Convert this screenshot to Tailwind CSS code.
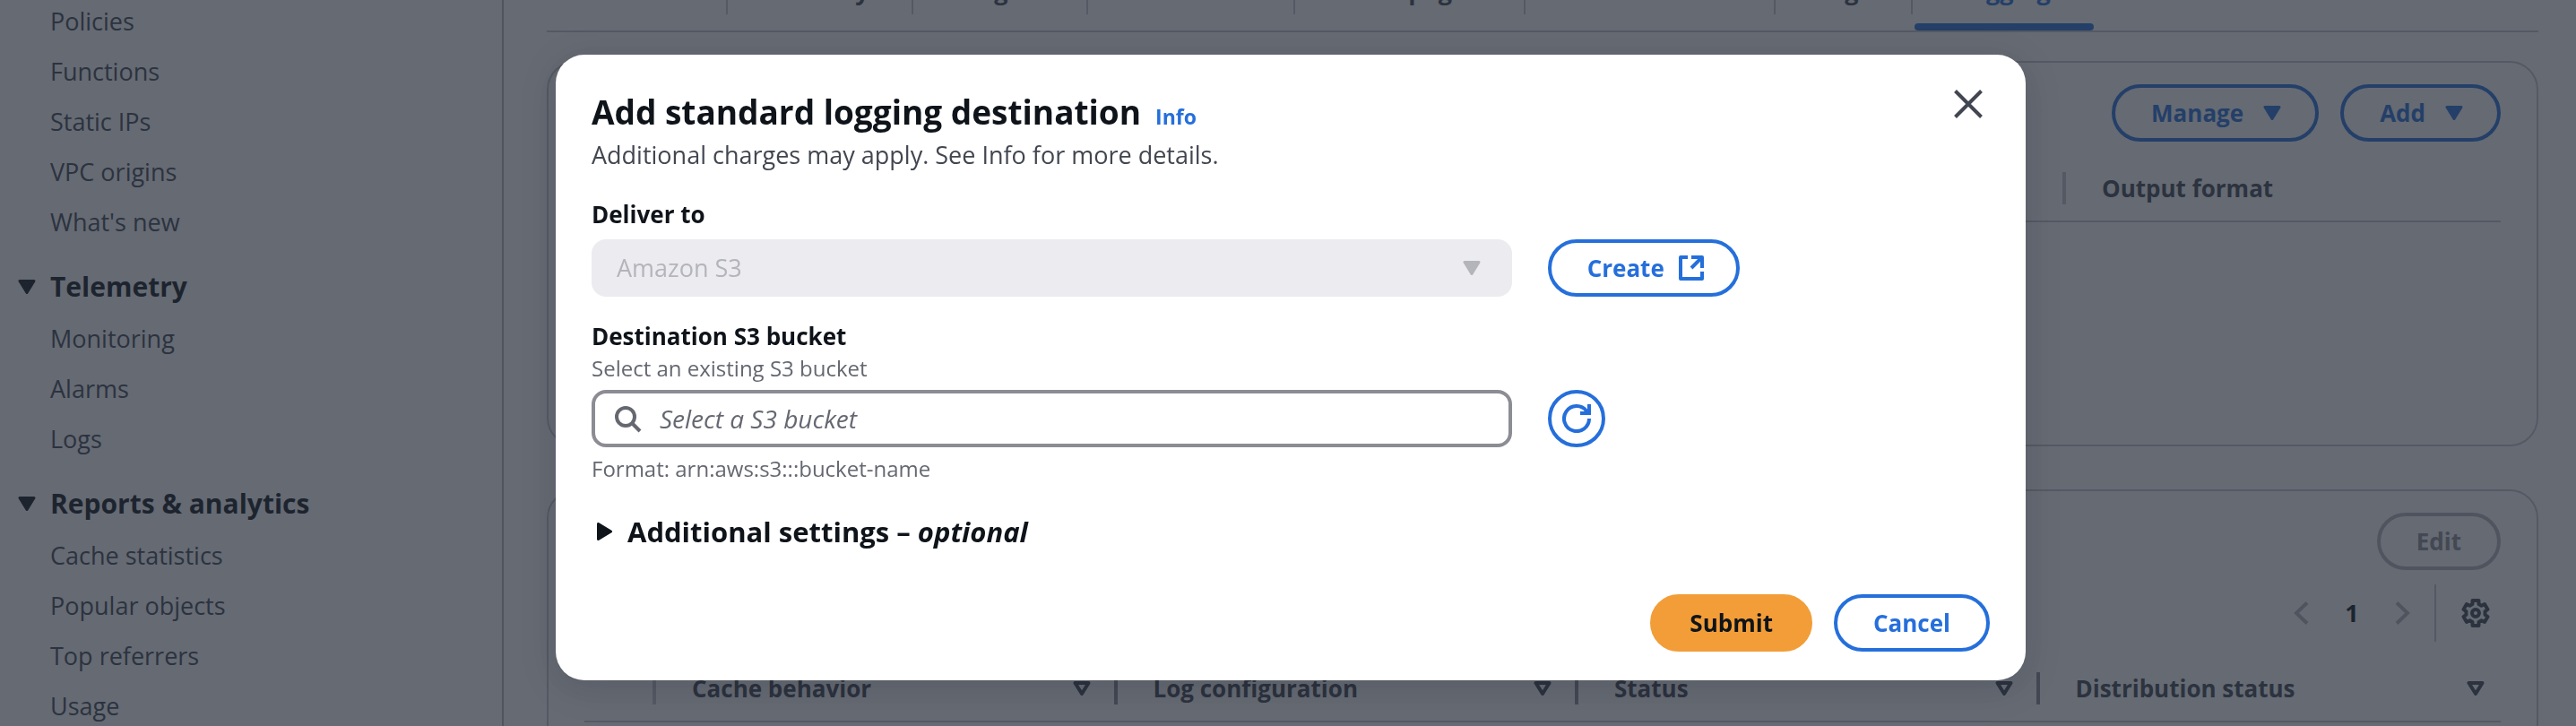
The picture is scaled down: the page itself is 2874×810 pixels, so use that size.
<!DOCTYPE html>
<html lang="en">

<head>
  <meta charset="UTF-8">
  <meta name="viewport" content="width=device-width, initial-scale=1.0">
  <title>Add standard logging destination</title>
  <script src="https://cdn.jsdelivr.net/npm/@tailwindcss/browser@4"></script>
</head>

<body class="h-screen overflow-hidden bg-white font-['Open_Sans',sans-serif] text-[27px] leading-10 text-[#424650]">
  <!-- Shared icons -->
  <svg class="hidden">
    <symbol id="caret-down" viewBox="0 0 20 16">
      <path d="M2 1.500h16L10 14.500z" fill="currentColor" stroke="currentColor" stroke-width="3" stroke-linejoin="round" />
    </symbol>
    <symbol id="caret-outline" viewBox="0 0 20 16">
      <path d="M2.500 2h15L10 14z" fill="none" stroke="currentColor" stroke-width="4" stroke-linejoin="round" />
    </symbol>
  </svg>

  <div class="flex h-full overflow-hidden">
    <!-- Sidebar -->
    <nav class="w-[562px] shrink-0 border-r-2 border-[#b4b4bb] pt-1 pl-5">
      <ul class="flex flex-col gap-4 pl-9">
        <li><a href="#">Policies</a></li>
        <li><a href="#">Functions</a></li>
        <li><a href="#">Static IPs</a></li>
        <li><a href="#">VPC origins</a></li>
        <li><a href="#">What's new</a></li>
      </ul>
      <button class="mt-8 flex items-center gap-4 text-[30px] font-bold text-[#0f141a]">
        <svg class="h-4 w-5"><use href="#caret-down" /></svg>Telemetry
      </button>
      <ul class="mt-[18px] flex flex-col gap-4 pl-9">
        <li><a href="#">Monitoring</a></li>
        <li><a href="#">Alarms</a></li>
        <li><a href="#">Logs</a></li>
      </ul>
      <button class="mt-8 flex items-center gap-4 text-[30px] font-bold text-[#0f141a]">
        <svg class="h-4 w-5"><use href="#caret-down" /></svg>Reports &amp; analytics
      </button>
      <ul class="mt-[18px] flex flex-col gap-4 pl-9">
        <li><a href="#">Cache statistics</a></li>
        <li><a href="#">Popular objects</a></li>
        <li><a href="#">Top referrers</a></li>
        <li><a href="#">Usage</a></li>
      </ul>
    </nav>

    <main class="min-w-0 grow pr-[42px] pl-12">
      <!-- Tabs -->
      <div class="-mt-[30px] grid grid-cols-[202px_207px_195px_231px_257px_279px_153px_202px] border-b-2 border-[#c6c6cd] text-center font-bold">
        <a href="#" class="mb-[18px] h-[46px] border-r-2 border-[#c6c6cd]">General</a>
        <a href="#" class="mb-[18px] h-[46px] border-r-2 border-[#c6c6cd]">Security</a>
        <a href="#" class="mb-[18px] h-[46px] border-r-2 border-[#c6c6cd]">Origins</a>
        <a href="#" class="mb-[18px] h-[46px] border-r-2 border-[#c6c6cd]">Behaviors</a>
        <a href="#" class="mb-[18px] h-[46px] border-r-2 border-[#c6c6cd]">Error pages</a>
        <a href="#" class="mb-[18px] h-[46px] border-r-2 border-[#c6c6cd]">Invalidations</a>
        <a href="#" class="mb-[18px] h-[46px] border-r-2 border-[#c6c6cd]">Tags</a>
        <a href="#" class="flex flex-col justify-between pl-0.5 text-[#256fdb]">Logging<span class="h-2 rounded bg-[#256fdb]"></span></a>
      </div>

      <!-- Log destinations -->
      <section class="mt-8 h-[430px] rounded-[32px] border-2 border-[#c6c6cd] px-10 pt-6">
        <div class="flex justify-end gap-6 text-[26px] font-bold text-[#256fdb]">
          <button class="flex h-16 items-center gap-[22px] rounded-full border-4 border-[#256fdb] pr-[38px] pl-10">Manage <svg class="h-4 w-5"><use href="#caret-down" /></svg></button>
          <button class="flex h-16 items-center gap-[22px] rounded-full border-4 border-[#256fdb] pr-[38px] pl-10">Add <svg class="h-4 w-5"><use href="#caret-down" /></svg></button>
        </div>
        <table class="mt-4 w-full table-fixed text-left text-[26px]">
          <thead>
            <tr class="border-b-2 border-[#c6c6cd]">
              <th class="py-[18px]"><div class="h-9 border-r-4 border-[#c6c6cd]"></div></th>
              <th class="w-[485px] py-[18px] font-bold"><div class="flex h-9 items-center pl-10">Output format</div></th>
            </tr>
          </thead>
        </table>
      </section>

      <!-- Log configurations -->
      <section class="mt-12 h-[430px] rounded-[32px] border-2 border-[#c6c6cd] px-10 pt-6">
        <div class="flex justify-end">
          <button disabled class="h-16 rounded-full border-4 border-[#b4b4bb] px-10 text-[26px] font-bold text-[#8c8c94]">Edit</button>
        </div>
        <div class="mt-4 flex h-16 items-center justify-end">
          <button disabled aria-label="Previous page" class="text-[#b4b4bb]">
            <svg class="h-8 w-8" viewBox="0 0 32 32" fill="none" stroke="currentColor" stroke-width="4"><path d="M22 4.500 10 16l12 11.500" /></svg>
          </button>
          <button class="w-20 font-bold text-[#0f141a]">1</button>
          <button disabled aria-label="Next page" class="text-[#b4b4bb]">
            <svg class="h-8 w-8" viewBox="0 0 32 32" fill="none" stroke="currentColor" stroke-width="4"><path d="m10 4.500 12 11.500-12 11.500" /></svg>
          </button>
          <div class="mr-7 ml-5 h-16 w-0.5 bg-[#c6c6cd]"></div>
          <button aria-label="Preferences" class="mr-3">
            <svg class="h-8 w-8" viewBox="0 0 32 32" fill="none" stroke="currentColor" stroke-width="4" stroke-linejoin="round">
              <path d="M12.500 2h7v4l3 1.700 3.500-1.700 3.500 6-3 2.200v3.600l3 2.200-3.500 6-3.500-1.700-3 1.700v4h-7v-4l-3-1.700L6 26l-3.500-6 3-2.200v-3.600l-3-2.200L6 6l3.500 1.700 3-1.700z" />
              <circle cx="16" cy="16" r="4" />
            </svg>
          </button>
        </div>
        <table class="mt-4 w-full table-fixed text-left text-[26px]">
          <thead>
            <tr class="border-b-2 border-[#c6c6cd]">
              <th class="w-20 py-[18px]"><div class="h-9 border-r-4 border-[#c6c6cd]"></div></th>
              <th class="py-[18px] font-bold"><div class="flex h-9 items-center justify-between border-r-4 border-[#8c8c94] pr-[26px] pl-10">Cache behavior <svg class="h-4 w-5"><use href="#caret-outline" /></svg></div></th>
              <th class="py-[18px] font-bold"><div class="flex h-9 items-center justify-between border-r-4 border-[#8c8c94] pr-[26px] pl-10">Log configuration <svg class="h-4 w-5"><use href="#caret-outline" /></svg></div></th>
              <th class="py-[18px] font-bold"><div class="flex h-9 items-center justify-between border-r-4 border-[#8c8c94] pr-[26px] pl-10">Status <svg class="h-4 w-5"><use href="#caret-outline" /></svg></div></th>
              <th class="py-[18px] font-bold"><div class="flex h-9 items-center justify-between pr-[18px] pl-10">Distribution status <svg class="h-4 w-5"><use href="#caret-outline" /></svg></div></th>
            </tr>
          </thead>
        </table>
      </section>
    </main>
  </div>

  <!-- Modal -->
  <div class="fixed inset-0 flex items-start justify-center bg-[#232b37]/70 pt-[61px] pl-1.5">
    <form role="dialog" aria-labelledby="modalTitle" class="w-[1640px] max-w-full rounded-[32px] bg-white px-10 pt-10 pb-8 text-[#0f141a] shadow-[0_8px_40px_rgba(0,7,22,0.15)]">
      <div class="flex h-12 items-center justify-between">
        <div class="flex items-baseline gap-4">
          <h1 id="modalTitle" class="text-[37px] leading-[48px] font-bold">Add standard logging destination</h1>
          <a href="#" class="text-[23px] font-bold text-[#256fdb]">Info</a>
        </div>
        <button type="button" aria-label="Close" class="mr-2 -mt-[18px] text-[#424650]">
          <svg class="h-8 w-8" viewBox="0 0 32 32" fill="none" stroke="currentColor" stroke-width="4"><path d="m1.500 1.500 29 29m0-29-29 29" /></svg>
        </button>
      </div>
      <p class="mt-1 text-[#424650]">Additional charges may apply. See Info for more details.</p>

      <label for="deliverTo" class="mt-[26px] block text-[26px] font-bold">Deliver to</label>
      <div class="mt-2 grid grid-cols-12 gap-10">
        <div class="relative col-span-8">
          <select id="deliverTo" disabled class="h-16 w-full appearance-none rounded-2xl bg-[#ebebf0] px-7 text-[#b4b4bb] opacity-100">
            <option>Amazon S3</option>
          </select>
          <svg class="absolute top-6 right-[35px] h-4 w-5 text-[#b4b4bb]"><use href="#caret-down" /></svg>
        </div>
        <div class="col-span-4">
          <button type="button" class="flex h-16 items-center gap-4 rounded-full border-4 border-[#256fdb] pr-9 pl-10 text-[26px] font-bold text-[#256fdb]">Create
            <svg class="h-7 w-7" viewBox="0 0 28 28" fill="none" stroke="currentColor" stroke-width="4" stroke-linejoin="round">
              <path d="M10 2H2v24h24v-8M14 2h12v12M26 2 14 14" />
            </svg>
          </button>
        </div>
      </div>

      <label for="bucket" class="mt-6 block text-[26px] font-bold">Destination S3 bucket</label>
      <p class="text-[24px] leading-8 text-[#656871]">Select an existing S3 bucket</p>
      <div class="mt-2 grid grid-cols-12 gap-10">
        <div class="relative col-span-8">
          <svg class="absolute top-4 left-6 h-8 w-8 text-[#656871]" viewBox="0 0 32 32" fill="none" stroke="currentColor" stroke-width="4">
            <circle cx="14" cy="14" r="10" /><path d="m21 21 9 9" />
          </svg>
          <input id="bucket" type="text" placeholder="Select a S3 bucket" class="h-16 w-full rounded-2xl border-4 border-[#8c8c94] pr-7 pl-[72px] text-[28px] placeholder:text-[#656871] placeholder:italic">
        </div>
        <div class="col-span-4">
          <button type="button" aria-label="Refresh" class="flex h-16 w-16 items-center justify-center rounded-full border-4 border-[#256fdb] text-[#256fdb]">
            <svg class="h-8 w-8" viewBox="0 0 32 32" fill="none" stroke="currentColor" stroke-width="4">
              <path d="M30 16a14 14 0 1 1-3-8.600l3 2.600M30 0v10H20" />
            </svg>
          </button>
        </div>
      </div>
      <p class="mt-2 text-[24px] leading-8 text-[#656871]">Format: arn:aws:s3:::bucket-name</p>

      <button type="button" class="mt-[34px] flex items-center gap-[17px] pl-1.5 text-[31px] font-bold">
        <svg class="h-5 w-[17px]" viewBox="0 0 17 20" fill="currentColor" stroke="currentColor" stroke-width="3" stroke-linejoin="round"><path d="M1.500 1.500v17l14-8.500z" /></svg>
        <span>Additional settings – <i>optional</i></span>
      </button>

      <div class="mt-[50px] flex justify-end gap-6 text-[26px] font-bold">
        <button type="submit" class="h-16 rounded-full border-4 border-[#f29d38] bg-[#f29d38] px-10">Submit</button>
        <button type="button" class="h-16 rounded-full border-4 border-[#256fdb] px-10 text-[#256fdb]">Cancel</button>
      </div>
    </form>
  </div>
</body>

</html>
